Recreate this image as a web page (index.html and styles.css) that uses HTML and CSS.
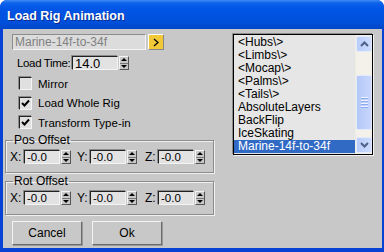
FILE: index.html
```html
<!DOCTYPE html>
<html>
<head>
<meta charset="utf-8">
<link rel="stylesheet" href="styles.css">
</head>
<body>
<div class="window">
  <div class="titlebar"><span class="title">Load Rig Animation</span></div>
  <div class="content">
    <div class="left">
      <div class="file-row">
        <div class="field file-field">Marine-14f-to-34f</div>
        <div class="browse"><svg width="8" height="9" viewBox="0 0 8 9"><path d="M2 1 L6 4.5 L2 8" fill="none" stroke="#000" stroke-width="1.2"/></svg></div>
      </div>
      <div class="time-row">
        <span class="lbl time-lbl">Load Time:</span>
        <div class="spinner">
          <div class="field time-field">14.0</div>
          <div class="arrows"><span class="up"></span><span class="down"></span></div>
        </div>
      </div>
      <div class="check-row"><span class="checkbox"></span><span class="lbl">Mirror</span></div>
      <div class="check-row"><span class="checkbox"><svg width="9" height="9" viewBox="0 0 9 9"><path d="M1 4 L3.5 6.5 L8 1.5" fill="none" stroke="#000" stroke-width="2"/></svg></span><span class="lbl">Load Whole Rig</span></div>
      <div class="check-row"><span class="checkbox"><svg width="9" height="9" viewBox="0 0 9 9"><path d="M1 4 L3.5 6.5 L8 1.5" fill="none" stroke="#000" stroke-width="2"/></svg></span><span class="lbl">Transform Type-in</span></div>
      <fieldset class="group pos">
        <legend>Pos Offset</legend>
        <div class="xyz">
          <span class="axis">X:</span>
          <div class="spinner"><div class="field small">-0.0</div><div class="arrows"><span class="up"></span><span class="down"></span></div></div>
          <span class="axis ay">Y:</span>
          <div class="spinner"><div class="field small">-0.0</div><div class="arrows"><span class="up"></span><span class="down"></span></div></div>
          <span class="axis az">Z:</span>
          <div class="spinner"><div class="field small">-0.0</div><div class="arrows"><span class="up"></span><span class="down"></span></div></div>
        </div>
      </fieldset>
      <fieldset class="group rot">
        <legend>Rot Offset</legend>
        <div class="xyz">
          <span class="axis">X:</span>
          <div class="spinner"><div class="field small">-0.0</div><div class="arrows"><span class="up"></span><span class="down"></span></div></div>
          <span class="axis ay">Y:</span>
          <div class="spinner"><div class="field small">-0.0</div><div class="arrows"><span class="up"></span><span class="down"></span></div></div>
          <span class="axis az">Z:</span>
          <div class="spinner"><div class="field small">-0.0</div><div class="arrows"><span class="up"></span><span class="down"></span></div></div>
        </div>
      </fieldset>
      <div class="buttons">
        <button class="btn">Cancel</button>
        <button class="btn">Ok</button>
      </div>
    </div>
    <div class="right">
      <div class="listbox">
        <ul class="items">
          <li>&lt;Hubs\&gt;</li>
          <li>&lt;Limbs\&gt;</li>
          <li>&lt;Mocap\&gt;</li>
          <li>&lt;Palms\&gt;</li>
          <li>&lt;Tails\&gt;</li>
          <li>AbsoluteLayers</li>
          <li>BackFlip</li>
          <li>IceSkating</li>
          <li class="sel">Marine-14f-to-34f</li>
        </ul>
        <div class="scrollbar">
          <div class="sbtn"><svg width="9" height="6" viewBox="0 0 9 6"><path d="M1 5 L4.5 1.5 L8 5" fill="none" stroke="#4d6185" stroke-width="2"/></svg></div>
          <div class="track">
            <div class="thumb"><span class="grip"></span><span class="grip"></span><span class="grip"></span><span class="grip"></span></div>
          </div>
          <div class="sbtn"><svg width="9" height="6" viewBox="0 0 9 6"><path d="M1 1 L4.5 4.5 L8 1" fill="none" stroke="#4d6185" stroke-width="2"/></svg></div>
        </div>
      </div>
    </div>
  </div>
</div>
</body>
</html>
```
FILE: styles.css
```css
html, body {
  margin: 0;
  padding: 0;
  background: #ffffff;
}
body {
  font-family: "Liberation Sans", Arial, sans-serif;
  font-size: 11.5px;
  color: #000;
}
.lbl, .axis {
  white-space: nowrap;
}
.window {
  width: 384px;
  height: 252px;
  box-sizing: border-box;
  background: #0842d4;
  border-radius: 7px 7px 0 0;
  display: flex;
  flex-direction: column;
  overflow: hidden;
}
.titlebar {
  height: 29px;
  box-sizing: border-box;
  padding: 4px 0 0 7px;
  background: linear-gradient(#3d8cf5 0, #0f63ea 3px, #0358e8 7px, #0052e0 14px, #0050dc 22px, #0046c8 29px);
}
.title {
  color: #fff;
  font-weight: bold;
  font-size: 12.5px;
  line-height: 25px;
  text-shadow: 1px 1px 0 #0a2a8a;
}
.content {
  flex: 1;
  margin: 0 2px 4px 3px;
  background: #c8c8c8;
  display: flex;
  padding-left: 2px;
}
.left {
  width: 210px;
  display: flex;
  flex-direction: column;
}
.field {
  box-sizing: border-box;
  background: #e2e2e2;
  border-style: solid;
  border-width: 1px;
  border-color: #222 #f4f4f4 #f4f4f4 #222;
  box-shadow: -1px -1px 0 #8c8c8c;
  white-space: nowrap;
  overflow: hidden;
}
.file-row {
  display: flex;
  gap: 2px;
  margin: 5px 0 0 7px;
}
.file-field {
  width: 134px;
  height: 16px;
  line-height: 14px;
  padding-left: 2px;
  color: #808080;
  border-color: #8c8c8c #f4f4f4 #f4f4f4 #8c8c8c;
  box-shadow: none;
  background: #dcdcdc;
  font-size: 12px;
}
.browse {
  width: 16px;
  height: 16px;
  box-sizing: border-box;
  background: #f0c838;
  border: 1px solid;
  border-color: #fff #888 #888 #fff;
  display: flex;
  align-items: center;
  justify-content: center;
}
.time-row {
  display: flex;
  align-items: center;
  margin: 6px 0 0 12px;
  height: 14px;
}
.time-lbl {
  width: 55px;
  letter-spacing: -0.35px;
}
.spinner {
  display: flex;
  gap: 1px;
}
.time-field {
  width: 46px;
  height: 14px;
  line-height: 13px;
  padding-left: 2px;
  font-size: 13px;
}
.arrows {
  width: 10px;
  height: 14px;
  display: flex;
  flex-direction: column;
  box-sizing: border-box;
  border: 1px solid;
  border-color: #f4f4f4 #555 #555 #f4f4f4;
  background: #c8c8c8;
}
.arrows .up, .arrows .down {
  flex: 1;
  display: flex;
  align-items: center;
  justify-content: center;
}
.arrows .up::after {
  content: "";
  border-left: 3px solid transparent;
  border-right: 3px solid transparent;
  border-bottom: 3px solid #000;
}
.arrows .down {
  border-top: 1px solid #777;
}
.arrows .down::after {
  content: "";
  border-left: 3px solid transparent;
  border-right: 3px solid transparent;
  border-top: 3px solid #000;
}
.check-row {
  display: flex;
  align-items: center;
  gap: 6px;
  margin: 7px 0 0 14px;
  height: 13px;
}
.check-row + .check-row {
  margin-top: 6.5px;
}
.checkbox {
  width: 13px;
  height: 13px;
  box-sizing: border-box;
  background: #e0e0e0;
  border: 1px solid;
  border-color: #222 #f4f4f4 #f4f4f4 #222;
  box-shadow: -1px -1px 0 #8c8c8c;
  display: flex;
  align-items: center;
  justify-content: center;
}
.group {
  margin: 5px 0 0 0;
  width: 209px;
  box-sizing: border-box;
  border: 1px solid #8c8c8c;
  box-shadow: inset 1px 1px 0 #f0f0f0, 1px 1px 0 #f0f0f0;
  padding: 3px 0 8px 4px;
}
.group.rot {
  margin-top: 2px;
  padding-bottom: 9px;
}
.group legend {
  padding: 0 1px;
  margin-left: 3px;
  line-height: 13px;
  font-size: 12px;
}
.xyz {
  display: flex;
  align-items: center;
}
.axis {
  width: 14px;
  font-size: 12px;
}
.axis.ay {
  margin-left: 6px;
  width: 13px;
}
.axis.az {
  margin-left: 8px;
  width: 13px;
}
.field.small {
  width: 36px;
  height: 14px;
  line-height: 13px;
  padding-left: 2px;
}
.buttons {
  display: flex;
  gap: 10px;
  margin: 6px 0 0 7px;
}
.btn {
  width: 70px;
  height: 24px;
  font-family: "Liberation Sans", Arial, sans-serif;
  font-size: 12px;
  background: #c8c8c8;
  border: 1px solid;
  border-color: #f4f4f4 #6a6a6a #6a6a6a #f4f4f4;
  box-shadow: 1px 1px 0 #999;
  padding: 0;
  color: #000;
}
.right {
  margin: 5px 0 0 18px;
}
.listbox {
  width: 140px;
  height: 121px;
  box-sizing: border-box;
  border: 1px solid #000;
  box-shadow: -1px -1px 0 #8c8c8c, 1px 1px 0 #f4f4f4;
  background: #e6e6e6;
  display: flex;
}
.items {
  list-style: none;
  margin: 0;
  padding: 1px 0 0 0;
  flex: 1;
}
.items li {
  height: 13px;
  line-height: 13px;
  padding-left: 4px;
  font-size: 12px;
  white-space: nowrap;
}
.items li.sel {
  background: #316ac5;
  color: #fff;
}
.scrollbar {
  width: 16px;
  display: flex;
  flex-direction: column;
  background: #f3f1ea;
  border-left: 1px solid #eeede5;
}
.sbtn {
  height: 16px;
  box-sizing: border-box;
  margin: 1px 0;
  border: 1px solid #e2eafc;
  border-radius: 2px;
  background: linear-gradient(90deg, #b9cdfb, #cddbfd);
  display: flex;
  align-items: center;
  justify-content: center;
}
.track {
  flex: 1;
  padding-top: 22px;
  padding-bottom: 6px;
  display: flex;
  flex-direction: column;
}
.thumb {
  flex: 1;
  box-sizing: border-box;
  border: 1px solid #e2eafc;
  border-radius: 2px;
  background: linear-gradient(90deg, #b3c8f8, #c8d7fc);
  display: flex;
  flex-direction: column;
  align-items: center;
  justify-content: center;
  gap: 1px;
}
.grip {
  width: 7px;
  height: 1px;
  background: #eef3fe;
  border-bottom: 1px solid #8caaf0;
}
```
